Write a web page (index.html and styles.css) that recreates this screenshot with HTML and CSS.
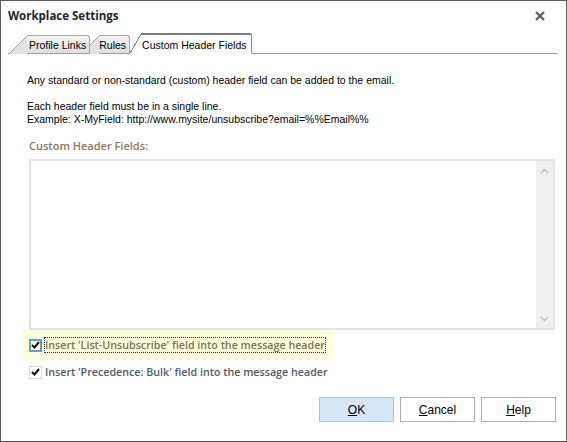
FILE: index.html
```html
<!DOCTYPE html>
<html lang="en">
<head>
  <meta charset="UTF-8" />
  <title>Workplace Settings</title>
  <link rel="stylesheet" href="styles.css">
</head>
<body>

  <div class="dialog">
    <div class="title-bar">
      <span class="title">Workplace Settings</span>
      <button class="close" aria-label="Close">
        <svg width="10" height="10" viewBox="0 0 10 10"><path d="M1 1L9 9M9 1L1 9" stroke="#5a5a5a" stroke-width="2.2"/></svg>
      </button>
    </div>

    <div class="tabs">
      <div class="tab tab-profile">Profile Links</div>
      <div class="tab tab-rules">Rules</div>
      <div class="tab tab-active">Custom Header Fields</div>
    </div>

    <div class="panel">
      <p class="intro">Any standard or non-standard (custom) header field can be added to the email.</p>
      <p class="hint">Each header field must be in a single line.<br>Example: X-MyField: http://www.mysite/unsubscribe?email=%%Email%%</p>

      <div class="field-label">Custom Header Fields:</div>
      <div class="field">
        <div class="field-text"></div>
        <div class="scrollbar">
          <svg width="9" height="6" viewBox="0 0 9 6"><path d="M1 5L4.5 1.5L8 5" fill="none" stroke="#c4c4c4" stroke-width="1.6"/></svg>
          <svg width="9" height="6" viewBox="0 0 9 6"><path d="M1 1L4.5 4.5L8 1" fill="none" stroke="#c4c4c4" stroke-width="1.6"/></svg>
        </div>
      </div>

      <div class="option option-hover">
        <span class="check check-focus">
          <svg width="9" height="8" viewBox="0 0 9 8"><path d="M1 4L3.5 6.5L8 1" fill="none" stroke="#111" stroke-width="2"/></svg>
        </span>
        <span class="option-text focused">Insert 'List-Unsubscribe' field into the message header</span>
      </div>
      <div class="option">
        <span class="check">
          <svg width="9" height="8" viewBox="0 0 9 8"><path d="M1 4L3.5 6.5L8 1" fill="none" stroke="#111" stroke-width="2"/></svg>
        </span>
        <span class="option-text">Insert 'Precedence: Bulk' field into the message header</span>
      </div>
    </div>

    <div class="buttons">
      <button class="btn btn-default"><u>O</u>K</button>
      <button class="btn"><u>C</u>ancel</button>
      <button class="btn"><u>H</u>elp</button>
    </div>
  </div>

</body>
</html>
```

FILE: styles.css
```css
body {
  margin: 0;
  background: #fff;
  font-family: "Liberation Sans", Arial, sans-serif;
  font-size: 10.5px;
  color: #000;
}

.dialog {
  width: 567px;
  height: 442px;
  box-sizing: border-box;
  border: 1px solid #5c5c5c;
  background: #fff;
  display: flex;
  flex-direction: column;
}

.title-bar {
  height: 29px;
  display: flex;
  align-items: center;
  justify-content: space-between;
  padding: 0 21px 0 7px;
}

.title {
  font-family: "Open Sans", sans-serif;
  font-weight: bold;
  font-size: 11.5px;
  color: #1c2433;
}

.close {
  background: none;
  border: none;
  padding: 0;
  display: flex;
}

/* tab strip */
.tabs {
  display: flex;
  align-items: flex-end;
  height: 20px;
  margin: 3px 8px 0 7px;
  padding-left: 19px;
  border-bottom: 1px solid #a0a0a0;
}

.tab {
  position: relative;
  height: 19px;
  line-height: 18px;
  box-sizing: border-box;
  padding: 0 3px 0 2px;
  border-top: 1px solid #a8a8a8;
  border-right: 1px solid #a8a8a8;
  border-top-right-radius: 3px;
  background: linear-gradient(#f4f4f4, #dedede);
  margin-bottom: -1px;
  border-bottom: 1px solid #a0a0a0;
}

.tab::before {
  content: "";
  position: absolute;
  top: -1px;
  bottom: -1px;
  left: -19px;
  width: 19px;
  background: linear-gradient(to top left, #e2e2e2 calc(50% - 1px), #a0a0a0 calc(50% - 1px), #a0a0a0 50%, transparent 50%);
}

.tab-profile {
  z-index: 2;
}

.tab-rules {
  z-index: 1;
  margin-left: 9px;
  padding-left: 0;
}

.tab-active {
  z-index: 3;
  height: 21px;
  margin-left: 11px;
  padding: 1px 4px 0 1px;
  border-top: 2px solid #7a7a7a;
  border-right: 1px solid #8a8a8a;
  border-bottom: 1px solid #fff;
  border-top-right-radius: 2px;
  background: #fff;
}

.tab-active::before {
  top: -2px;
  left: -12px;
  width: 12px;
  background: linear-gradient(to top left, #fff calc(50% - 1px), #8a8a8a calc(50% - 1px), #8a8a8a 50%, transparent 50%);
}

/* panel content */
.panel {
  flex: 1;
  padding: 20px 11px 0 20px;
}

.panel p {
  margin: 0;
  padding-left: 6px;
  line-height: 13px;
}

.intro {
  margin-bottom: 13px !important;
}

.field-label {
  margin: 12px 0 6px 8px;
  font-family: "Open Sans", sans-serif;
  font-weight: 600;
  font-size: 11px;
  color: #8a7a5c;
}

.field {
  display: flex;
  height: 171px;
  margin-left: 8px;
  box-sizing: border-box;
  border: 2px solid #e3e3e3;
  background: #fff;
}

.field-text {
  flex: 1;
}

.scrollbar {
  width: 17px;
  background: #f0f0f0;
  display: flex;
  flex-direction: column;
  align-items: center;
  justify-content: space-between;
  padding: 7px 0 6px;
}

.option {
  display: flex;
  align-items: center;
  height: 24px;
  padding-left: 8px;
  font-family: "Open Sans", sans-serif;
  font-weight: 600;
  font-size: 10.7px;
  color: #515a6a;
  white-space: nowrap;
}

.option-hover {
  width: 304px;
  height: 30px;
  background: #ffffdd;
  color: #76744f;
}

.check {
  width: 13px;
  height: 13px;
  box-sizing: border-box;
  border: 1px solid #dadada;
  background: #fff;
  display: flex;
  align-items: center;
  justify-content: center;
  margin-right: 2px;
}

.check-focus {
  border: 2px solid #5aa3bd;
}

.option-text {
  padding: 0;
  border: 1px dotted transparent;
}

.option-text.focused {
  border-color: #333;
}

/* footer buttons */
.buttons {
  display: flex;
  justify-content: flex-end;
  gap: 6px;
  padding: 0 10px 19px 0;
}

.btn {
  width: 75px;
  height: 25px;
  border: 1px solid #adadad;
  background: #fff;
  font-family: "Liberation Sans", Arial, sans-serif;
  font-size: 12px;
  color: #000;
  padding: 0;
}

.btn-default {
  background: #d6e6f5;
  border-color: #a4c6e5;
}
```
